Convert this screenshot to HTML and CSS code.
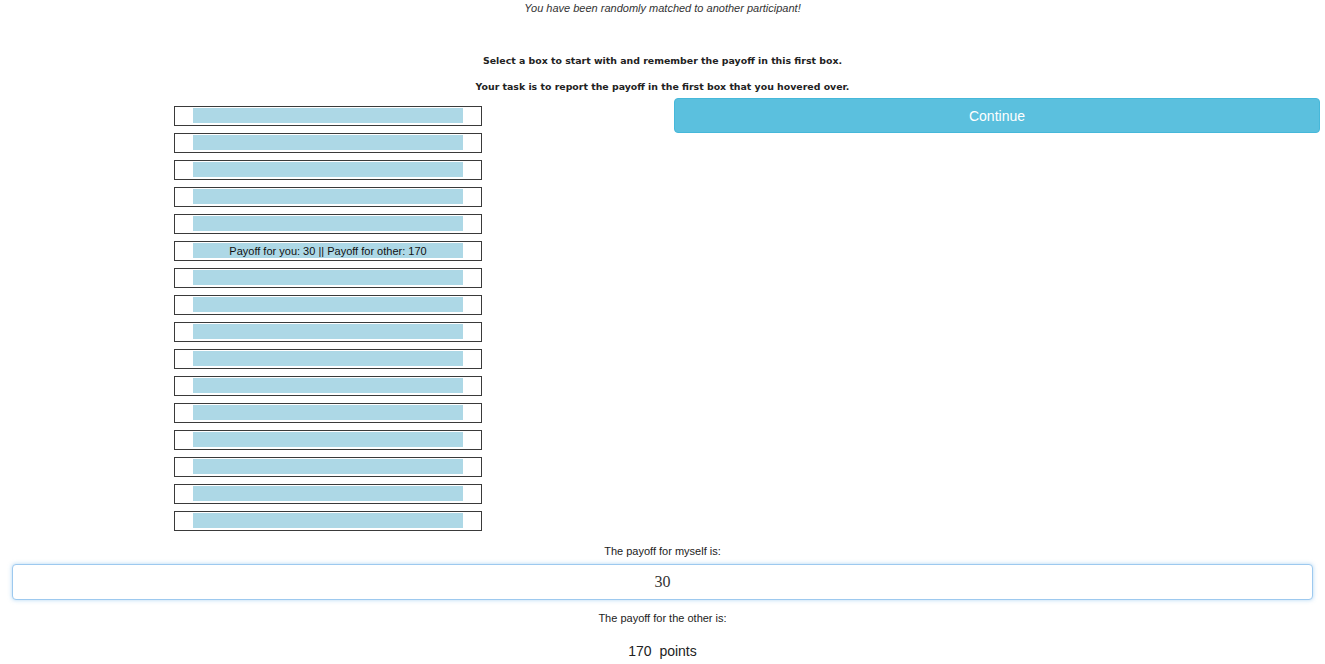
FILE: index.html
```html
<!DOCTYPE html>
<html lang="en">
<head>
  <meta charset="UTF-8">
  <meta name="viewport" content="width=device-width, initial-scale=1.0">
  <title>Box Task</title>
  <link rel="stylesheet" href="styles.css">
</head>
<body>
  <p class="matched">You have been randomly matched to another participant!</p>

  <div class="instructions">
    <p>Select a box to start with and remember the payoff in this first box.</p>
    <p>Your task is to report the payoff in the first box that you hovered over.</p>
  </div>

  <div class="task-row">
    <div class="box-col">
      <div class="box"><div class="payoff"></div></div>
      <div class="box"><div class="payoff"></div></div>
      <div class="box"><div class="payoff"></div></div>
      <div class="box"><div class="payoff"></div></div>
      <div class="box"><div class="payoff"></div></div>
      <div class="box"><div class="payoff">Payoff for you: 30 || Payoff for other: 170</div></div>
      <div class="box"><div class="payoff"></div></div>
      <div class="box"><div class="payoff"></div></div>
      <div class="box"><div class="payoff"></div></div>
      <div class="box"><div class="payoff"></div></div>
      <div class="box"><div class="payoff"></div></div>
      <div class="box"><div class="payoff"></div></div>
      <div class="box"><div class="payoff"></div></div>
      <div class="box"><div class="payoff"></div></div>
      <div class="box"><div class="payoff"></div></div>
      <div class="box"><div class="payoff"></div></div>
    </div>
    <div class="btn-col">
      <button type="button" class="btn-continue">Continue</button>
    </div>
  </div>

  <div class="answers">
    <label for="self-payoff">The payoff for myself is:</label>
    <input type="text" id="self-payoff" class="payoff-input" value="30" autofocus>
    <p class="other-label">The payoff for the other is:</p>
    <p class="other-value">170&nbsp; points</p>
  </div>
</body>
</html>
```

FILE: styles.css
```css
body {
  font-family: "Liberation Sans", Arial, sans-serif;
  color: #222;
  background: #fff;
  margin: 0;
  padding: 0 12px;
}

.matched {
  margin: 0;
  padding-top: 1px;
  text-align: center;
  font-style: italic;
  font-size: 11px;
  color: #333;
  line-height: 14px;
}

.instructions {
  margin-top: 39px;
  text-align: center;
  font-family: "DejaVu Sans", Verdana, sans-serif;
  font-weight: bold;
  font-size: 9.4px;
  color: #222;
}

.instructions p {
  margin: 0 0 12px;
  line-height: 14px;
}

.task-row {
  display: grid;
  grid-template-columns: 650px 1fr;
  margin-top: -8px;
  margin-right: -7px;
}

.box-col {
  display: flex;
  flex-direction: column;
  align-items: center;
  gap: 7px;
  padding-top: 8px;
}

.box {
  width: 306px;
  height: 18px;
  border: 1px solid #3a3a3a;
  box-sizing: content-box;
  margin-left: -18px;
}

.payoff {
  margin: 1px 0 0 18px;
  width: 270px;
  height: 15px;
  background: #add8e6;
  text-align: center;
  font-size: 11px;
  line-height: 16px;
  color: #111;
}

.btn-col {
  padding-left: 12px;
}

.btn-continue {
  width: 100%;
  height: 35px;
  background: #5bc0de;
  border: 1px solid #46b8da;
  border-radius: 4px;
  color: #fff;
  font-family: "Liberation Sans", Arial, sans-serif;
  font-size: 14px;
}

.answers {
  margin-top: 13px;
  text-align: center;
}

.answers label {
  display: block;
  font-size: 11px;
  line-height: 14px;
  margin-bottom: 6px;
}

.payoff-input {
  display: block;
  width: 100%;
  height: 36px;
  box-sizing: border-box;
  border: 1px solid #9dc9ef;
  border-radius: 4px;
  box-shadow: 0 0 4px rgba(102, 175, 233, 0.5);
  outline: none;
  text-align: center;
  font-family: "Liberation Serif", "Times New Roman", serif;
  font-size: 16px;
  color: #333;
  caret-color: #333;
}

.other-label {
  margin: 11px 0 0;
  font-size: 11px;
  line-height: 14px;
}

.other-value {
  margin: 18px 0 0;
  font-size: 14px;
  line-height: 16px;
}
```
